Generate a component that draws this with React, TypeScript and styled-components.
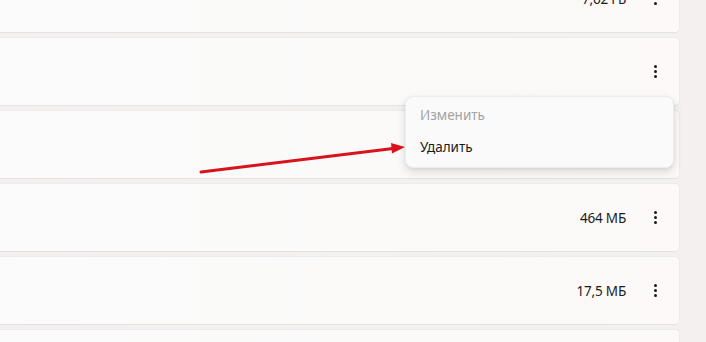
import React from "react";
import styled, { createGlobalStyle } from "styled-components";

const Global = createGlobalStyle`
  html, body { margin: 0; padding: 0; }
  body {
    background: #f3f0ef;
    font-family: "Noto Sans", "Open Sans", sans-serif;
    overflow: hidden;
  }
`;

const Page = styled.div`
  position: relative;
  width: 706px;
  height: 342px;
  overflow: hidden;
`;

const List = styled.div`
  display: flex;
  flex-direction: column;
  gap: 4px;
  margin: -36px 26px 0 -20px;
`;

const Card = styled.div`
  position: relative;
  height: 69px;
  box-sizing: border-box;
  display: flex;
  align-items: center;
  justify-content: flex-end;
  padding-right: 8px;
  gap: 13px;
  border: 1px solid #ececec;
  border-bottom-color: #e2e2e2;
  border-radius: 5px;
  background: linear-gradient(90deg, #fbfbfb 0%, #fbfaf9 60%, #fcf9f8 100%);
`;

const Size = styled.span`
  font-size: 13.5px;
  color: #1b1b1b;
  letter-spacing: -0.2px;
`;

const Kebab = styled.button`
  width: 32px;
  height: 32px;
  border: none;
  background: transparent;
  padding: 0;
  display: flex;
  flex-direction: column;
  align-items: center;
  justify-content: center;
  gap: 2px;
  span {
    width: 3px;
    height: 3px;
    border-radius: 50%;
    background: #1a1a1a;
  }
`;

const Menu = styled.div`
  position: absolute;
  z-index: 2;
  top: 58px;
  right: 5px;
  width: 269px;
  box-sizing: border-box;
  padding: 2px 0 4px;
  border-radius: 8px;
  background: #fafafa;
  border: 1px solid #ededed;
  box-shadow: 0 4px 10px rgba(0, 0, 0, 0.13), 0 1px 3px rgba(0, 0, 0, 0.06);
`;

const MenuItem = styled.div<{ $disabled?: boolean }>`
  height: 32px;
  display: flex;
  align-items: center;
  padding-left: 14px;
  font-size: 13.5px;
  color: ${(p) => (p.$disabled ? "#a3a3a3" : "#1b1b1b")};
`;

const Arrow = styled.svg`
  position: absolute;
  left: 195px;
  top: 138px;
  z-index: 3;
`;

const Dots = () => (
  <Kebab>
    <span />
    <span />
    <span />
  </Kebab>
);

export default function App() {
  return (
    <>
      <Global />
      <Page>
        <List>
          <Card>
            <Size>7,62 ГБ</Size>
            <Dots />
          </Card>
          <Card>
            <Dots />
            <Menu>
              <MenuItem $disabled>Изменить</MenuItem>
              <MenuItem>Удалить</MenuItem>
            </Menu>
          </Card>
          <Card />
          <Card>
            <Size>464 МБ</Size>
            <Dots />
          </Card>
          <Card>
            <Size>17,5 МБ</Size>
            <Dots />
          </Card>
          <Card />
        </List>
        <Arrow width="220" height="40" viewBox="0 0 220 40">
          <line x1="6" y1="34" x2="198" y2="10.5" stroke="#d8131b" strokeWidth="3" strokeLinecap="round" />
          <polygon points="196,5 210,9 197,15.5" fill="#d8131b" />
        </Arrow>
      </Page>
    </>
  );
}
